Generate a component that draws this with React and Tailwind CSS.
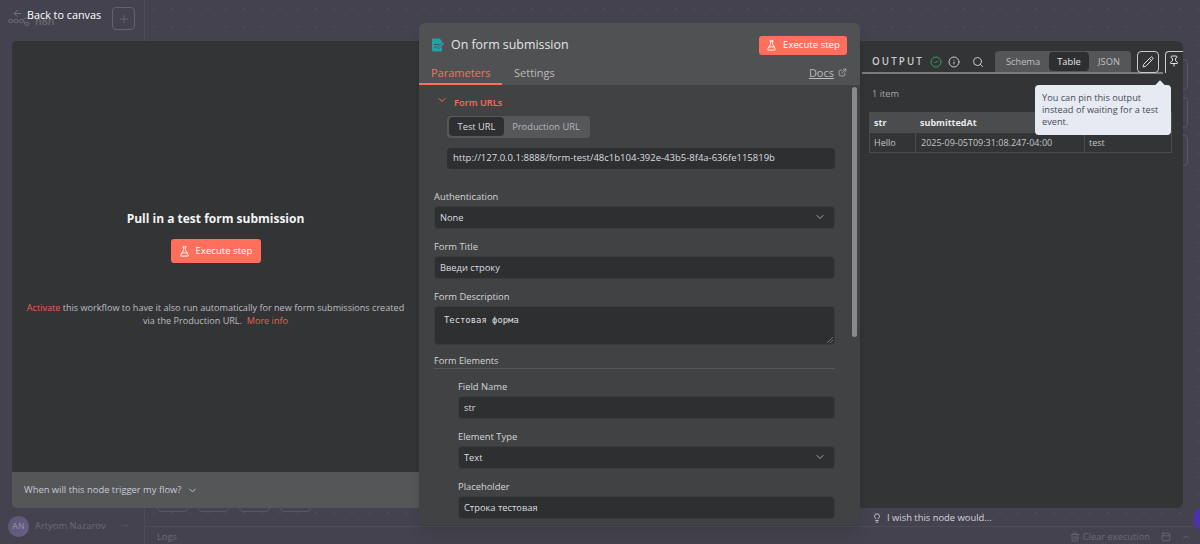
import React from 'react';
import { ArrowLeft, Plus, ChevronDown, FlaskConical, ExternalLink, CircleCheck, Info, Search, Pencil, Pin, Lightbulb, Trash2, PanelTop, ChevronUp } from 'lucide-react';

const font = { fontFamily: '"Open Sans", sans-serif' };

const ExecuteButton = ({ className = '' }) => (
  <button className={`flex items-center justify-center gap-[6px] rounded-[3px] bg-[#ff6f5c] text-[9.6px] text-white ${className}`}>
    <FlaskConical size={11} />
    Execute step
  </button>
);

const Field = ({ label, children, className = '' }) => (
  <div className={className}>
    <div className="mb-[2px] h-[16px] text-[9.4px] leading-[18px] text-[#d4d5d8]">{label}</div>
    {children}
  </div>
);

const TextBox = ({ value, select }) => (
  <div className="flex h-[23px] items-center justify-between rounded border border-[#3a3b3c] bg-[#2e2f30] pr-[8px] pl-[5px] text-[9.3px] text-[#dddee0]">
    <span className="pt-[1px]">{value}</span>
    {select && <ChevronDown size={12} className="text-[#a5a6a9]" />}
  </div>
);

const InputPanel = () => (
  <div className="relative flex w-[407px] shrink-0 flex-col rounded-l bg-[#333436]">
    <div className="flex flex-1 flex-col items-center pt-[169px]">
      <h2 className="text-[12px] leading-[18px] font-bold text-[#f2f3f5]">Pull in a test form submission</h2>
      <ExecuteButton className="mt-[11px] h-6 w-[90px]" />
      <p className="mt-[38px] w-[385px] text-center text-[9.1px] leading-[13px] text-[#bdbec2]">
        <span className="text-[#e8604e]">Activate</span> this workflow to have it also run automatically for new form submissions created via the Production URL.{'\u00a0\u00a0'}
        <span className="text-[#e8604e]">More info</span>
      </p>
    </div>
    <div className="flex h-[36px] items-center gap-[6px] rounded-bl bg-[#555657] pl-3 text-[9.4px] text-[#c5cbd8]">
      When will this node trigger my flow?
      <ChevronDown size={11} />
    </div>
  </div>
);

const CenterPanel = () => (
  <div className="absolute top-[23px] left-[419px] flex h-[502px] w-[441px] flex-col overflow-hidden rounded-md bg-[#414243] shadow-lg">
    <div className="bg-[#505152]">
      <div className="flex h-[43px] items-center justify-between pt-[1px] pr-[13px] pl-[12px]">
        <div className="flex items-center gap-[6px]">
          <svg width="14" height="14" viewBox="0 0 14 14" fill="none">
            <path d="M1 1.5A1 1 0 0 1 2 .5h6.5L11 3v9.5a1 1 0 0 1-1 1H2a1 1 0 0 1-1-1z" fill="#1aa6a6" />
            <path d="M3 6.5h5M3 9h3" stroke="#505152" strokeWidth="1" />
            <path d="M7 10.5l.4-1.8 4.6-4.6 1.4 1.4-4.6 4.6z" fill="#1aa6a6" stroke="#505152" strokeWidth="0.6" />
          </svg>
          <span className="text-[12.4px] font-medium text-[#e4e5e7]">On form submission</span>
        </div>
        <ExecuteButton className="h-[19px] w-[88px]" />
      </div>
      <div className="flex h-[19px] items-start justify-between pr-[13px] text-[11px] leading-[14px]">
        <div className="flex">
          <div className="h-[19px] w-[83px] border-b-2 border-[#ff6f5c] pl-3 text-[#f5705e]">Parameters</div>
          <div className="ml-[12px] text-[#b9babd]">Settings</div>
        </div>
        <div className="flex items-start gap-1 text-[#b9babd]">
          <span className="underline">Docs</span>
          <ExternalLink size={9} className="mt-0.5" />
        </div>
      </div>
    </div>
    <div className="relative flex-1 pt-[11px] pr-[25px] pl-[15px]">
      <div className="absolute top-[2px] right-[3px] h-[250px] w-[5px] rounded-full bg-[#8a8b8d]" />
      <div className="flex items-center pl-[2px] text-[9.3px] font-semibold text-[#f5705e]">
        <ChevronDown size={12} className="mr-[6px] -mt-[6px]" />
        Form URLs
      </div>
      <div className="mt-[6px] ml-[13px]">
        <div className="flex h-[22px] w-[143px] items-center rounded bg-[#565758] p-[2px] text-[9.3px]">
          <div className="flex h-[19px] w-[55px] items-center justify-center rounded bg-[#2e2f30] text-[#dcdde0]">Test URL</div>
          <div className="flex-1 text-center text-[#b4b7c2]">Production URL</div>
        </div>
        <div className="mt-[10px] flex h-[21px] items-center rounded bg-[#2e2f30] pl-[6px] text-[9.5px] text-[#dcdde0]">
          http://127.0.0.1:8888/form-test/48c1b104-392e-43b5-8f4a-636fe115819b
        </div>
      </div>
      <Field label="Authentication" className="mt-[19px]"><TextBox value="None" select /></Field>
      <Field label="Form Title" className="mt-[9px]"><TextBox value="Введи строку" /></Field>
      <Field label="Form Description" className="mt-[9px]">
        <div className="relative h-[39px] rounded border border-[#3a3b3c] bg-[#2e2f30] pt-[7px] pl-[9px] font-['DejaVu_Sans_Mono',monospace] text-[8.9px] text-[#dddee0]">
          Тестовая форма
          <svg className="absolute right-[1px] bottom-[1px]" width="7" height="7" viewBox="0 0 7 7" stroke="#8a8b8d" strokeWidth="0.7">
            <path d="M1 7l6-6M4 7l3-3" />
          </svg>
        </div>
      </Field>
      <div className="mt-[8px] h-[16px] border-b border-[#565758] text-[9.2px] leading-[16px] font-medium text-[#d4d5d8]">Form Elements</div>
      <div className="mt-[9px] ml-[24px]">
        <Field label="Field Name"><TextBox value="str" /></Field>
        <Field label="Element Type" className="mt-[9px]"><TextBox value="Text" select /></Field>
        <Field label="Placeholder" className="mt-[9px]"><TextBox value="Строка тестовая" /></Field>
      </div>
    </div>
  </div>
);

const OutputPanel = () => (
  <div className="ml-[441px] flex-1 overflow-hidden rounded-r-md bg-[#333436] pt-[10px] pl-[2px]">
    <div className="flex h-[23px] w-[301px] items-center border-b-2 border-[#7b7c7e] pl-[10px]">
      <span className="w-[52px] pt-[1px] text-[9.8px] font-semibold tracking-[2.1px] text-[#c9cacc]">OUTPUT</span>
      <CircleCheck size={12} className="ml-[6px] text-[#2f9e62]" />
      <Info size={12} className="ml-[6px] text-[#c9cacc]" />
      <Search size={12} className="ml-[12px] text-[#c9cacc]" />
      <div className="ml-[11px] flex h-[21px] w-[136px] items-center rounded-t bg-[#555657] px-[2px] text-[9.3px] text-[#bfc0c3]">
        <span className="w-[52px] text-center">Schema</span>
        <span className="h-[19px] w-[40px] rounded bg-[#2e2f30] text-center leading-[19px] text-[#e4e5e7]">Table</span>
        <span className="flex-1 text-center">JSON</span>
      </div>
    </div>
    <div className="mt-[13px] pl-[10px] text-[9.2px] text-[#a5a6a9]">1 item</div>
    <div className="mt-[11px] ml-[7px] w-[303px] text-[9px] text-[#c5c6c9]">
      <div className="flex h-[21px] items-center bg-[#4b4c4d] font-bold text-[#e8e9eb]">
        <span className="w-[46px] pl-[5px]">str</span>
        <span className="pl-[5px]">submittedAt</span>
      </div>
      <div className="flex h-[20px] border border-t-0 border-[#4b4c4d] leading-[19px]">
        <span className="w-[46px] border-r border-[#4b4c4d] pl-[4px]">Hello</span>
        <span className="w-[169px] border-r border-[#4b4c4d] pl-[5px]">2025-09-05T09:31:08.247-04:00</span>
        <span className="pl-[4px]">test</span>
      </div>
    </div>
  </div>
);

export default function App() {
  return (
    <div style={font} className="relative flex h-[544px] w-[1200px] overflow-hidden bg-[#45424f]">
      {/* dimmed app behind the modal */}
      <aside className="flex w-[145px] shrink-0 flex-col justify-between border-r border-[#4d4a58] pb-[7px] pl-[8px]">
        <div className="flex items-start justify-between pt-[7px] pr-[9px]">
          <div className="mt-[7px] flex items-center gap-[5px] text-[10.5px] font-semibold text-[#6c6977]">
            <svg width="22" height="9" viewBox="0 0 22 9" fill="none" stroke="#6c6977" strokeWidth="1">
              <circle cx="2.5" cy="4" r="1.8" />
              <circle cx="8" cy="4" r="1.8" />
              <circle cx="13.5" cy="4" r="1.8" />
              <circle cx="19" cy="7" r="1.8" />
              <path d="M4.3 4h1.9M9.8 4h1.9M15.3 4c1.5 0 1 3 1.9 3M15 3c1-2 3-2 5-2" />
            </svg>
            n8n
          </div>
          <div className="flex h-[23px] w-[23px] items-center justify-center rounded border border-[#65626f] text-[#65626f]">
            <Plus size={12} />
          </div>
        </div>
        <div className="flex items-center gap-[6px] text-[9.4px] text-[#6c6977]">
          <div className="flex h-[21px] w-[21px] items-center justify-center rounded-full bg-gradient-to-br from-[#5a5676] to-[#6a5f82] text-[8.5px] font-semibold text-[#8b88a0]">AN</div>
          Artyom Nazarov
          <span className="ml-[10px]">···</span>
        </div>
      </aside>
      <main className="flex flex-1 flex-col">
        <div className="flex flex-1 flex-col justify-between bg-[radial-gradient(#4d4a58_1px,transparent_1px)] bg-[size:18px_18px] pt-[59px] pr-[12px]">
          <div className="flex flex-col items-end gap-[7px]">
            <div className="h-[31px] w-[31px] rounded border border-[#5a5764]" />
            <div className="h-[31px] w-[31px] rounded border border-[#5a5764]" />
            <div className="h-[31px] w-[31px] rounded border border-[#5a5764]" />
          </div>
          <div className="mb-[14px] ml-[12px] flex gap-[10px]">
            <div className="h-[31px] w-[31px] rounded border border-[#5a5764]" />
            <div className="h-[31px] w-[31px] rounded border border-[#5a5764]" />
            <div className="h-[31px] w-[31px] rounded border border-[#5a5764]" />
            <div className="h-[31px] w-[31px] rounded border border-[#5a5764]" />
          </div>
        </div>
        <div className="flex h-[18px] items-center justify-between border-t border-[#4f4c5a] pt-[3px] pr-[9px] pl-[12px] text-[9.3px] text-[#6c6977]">
          <span>Logs</span>
          <div className="flex items-center">
            <Trash2 size={10} />
            <span className="ml-[3px]">Clear execution</span>
            <PanelTop size={10} className="ml-[11px]" />
            <ChevronUp size={10} className="ml-[10px]" />
          </div>
        </div>
      </main>

      {/* overlay */}
      <div className="absolute top-[7px] left-[12px] flex items-center text-[10.8px] leading-[16px] text-white">
        <ArrowLeft size={11} className="-mt-[4px] text-[#77747f]" />
        <span className="ml-[4px]">Back to canvas</span>
      </div>
      <div className="absolute top-[41px] left-[12px] flex h-[467px] w-[1171px] overflow-hidden rounded">
        <InputPanel />
        <OutputPanel />
      </div>
      <CenterPanel />

      <div className="absolute top-[51px] left-[1137px] flex h-[22px] w-[22px] items-center justify-center rounded border border-[#c9cacc] text-[#e4e5e7]"><Pencil size={12} /></div>
      <div className="absolute top-[51px] left-[1165px] flex h-[22px] w-[18px] justify-center rounded-tl border-t border-l border-[#c9cacc] pt-[3px] pr-[2px] text-[#e4e5e7]"><Pin size={12} /></div>

      <div className="absolute top-[85px] left-[1035px] h-[50px] w-[136px] rounded bg-[#e6eaf2] px-[7px] py-[7px] text-[9.2px] leading-[12px] text-[#4a4b55]">
        <div className="absolute -top-[3px] right-[7px] h-2 w-2 rotate-45 bg-[#e6eaf2]" />
        You can pin this output instead of waiting for a test event.
      </div>

      <div className="absolute top-[511px] left-[872px] flex items-center gap-[5px] text-[9.4px] text-[#d4d5d8]">
        <Lightbulb size={10} />
        I wish this node would...
      </div>
      <div className="absolute top-[507px] left-[1193px] h-[24px] w-[24px] rounded-full bg-[#4b32a8]" />
    </div>
  );
}
